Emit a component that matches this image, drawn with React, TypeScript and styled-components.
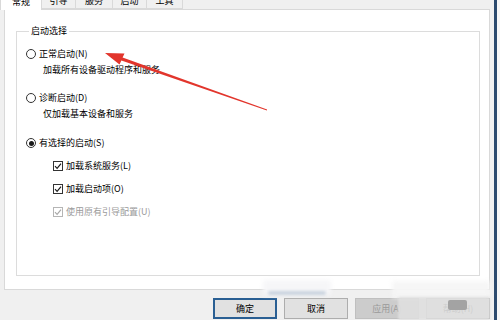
import React from 'react';
import styled, { createGlobalStyle } from 'styled-components';

const GlobalStyle = createGlobalStyle`
  html, body {
    margin: 0;
    padding: 0;
    background: #f0f0f0;
  }
  body {
    font-family: "Noto Sans CJK SC", "Liberation Sans", sans-serif;
    font-size: 9px;
    color: #000;
  }
`;

const Window = styled.div`
  position: relative;
  width: 500px;
  height: 320px;
  overflow: hidden;
  box-sizing: border-box;
  display: flex;
  flex-direction: column;
  background: #f0f0f0;
  border-right: 3px solid #f7f7f7;
  &::after {
    content: '';
    position: absolute;
    top: 0;
    bottom: 0;
    right: 0;
    width: 3px;
    background: #2c4a6e;
  }
`;

const TabStrip = styled.div`
  display: flex;
  height: 9px;
  position: relative;
  z-index: 1;
`;

const Tab = styled.div<{ $w: number; $active?: boolean }>`
  width: ${p => p.$w}px;
  margin-top: -8px;
  box-sizing: border-box;
  display: flex;
  align-items: center;
  justify-content: center;
  background: ${p => (p.$active ? '#ffffff' : '#f0f0f0')};
  border: 1px solid #d9d9d9;
  border-left: ${p => (p.$active ? '1px solid #d9d9d9' : 'none')};
  border-bottom: ${p => (p.$active ? 'none' : '1px solid #d9d9d9')};
  height: ${p => (p.$active ? 18 : 17)}px;
  line-height: 12px;
`;

const Panel = styled.div`
  margin: 0 7px 0 4px;
  height: 281px;
  box-sizing: border-box;
  background: #ffffff;
  border: 1px solid #d9d9d9;
  padding: 15px 9px 13px 11px;
  display: flex;
`;

const GroupBox = styled.fieldset`
  flex: 1;
  margin: 0;
  padding: 11px 0 0 9px;
  border: 1px solid #dcdcdc;
  min-width: 0;
  display: flex;
  flex-direction: column;
`;

const Legend = styled.legend`
  padding: 0 2px;
  margin-left: 3px;
  line-height: 12px;
`;

const Choice = styled.div<{ $gap?: number }>`
  display: flex;
  flex-direction: column;
  margin-top: ${p => p.$gap ?? 0}px;
`;

const Row = styled.label<{ $disabled?: boolean }>`
  display: flex;
  align-items: center;
  gap: 3px;
  height: 12px;
  line-height: 12px;
  color: ${p => (p.$disabled ? '#9a9a9a' : '#000')};
`;

const Radio = styled.span<{ $checked?: boolean }>`
  width: 10px;
  height: 10px;
  box-sizing: border-box;
  border: 1px solid #333;
  border-radius: 50%;
  display: flex;
  align-items: center;
  justify-content: center;
  background: #fff;
  &::after {
    content: '';
    width: 5px;
    height: 5px;
    border-radius: 50%;
    background: ${p => (p.$checked ? '#1a1a1a' : 'transparent')};
  }
`;

const Description = styled.div`
  padding-left: 17px;
  margin-top: 4px;
  line-height: 12px;
`;

const CheckList = styled.div`
  display: flex;
  flex-direction: column;
  gap: 11px;
  padding-left: 27px;
  margin-top: 11px;
`;

const Box = styled.span<{ $disabled?: boolean }>`
  width: 10px;
  height: 10px;
  box-sizing: border-box;
  border: 1px solid ${p => (p.$disabled ? '#b5b5b5' : '#333')};
  background: #fff;
  display: flex;
  align-items: center;
  justify-content: center;
  svg {
    display: block;
  }
`;

const ButtonRow = styled.div`
  display: flex;
  gap: 7px;
  padding: 8px 0 0 213px;
`;

const Button = styled.div<{ $default?: boolean; $disabled?: boolean }>`
  width: 64px;
  height: 21px;
  box-sizing: border-box;
  display: flex;
  align-items: center;
  justify-content: center;
  background: ${p => (p.$disabled ? '#cccccc' : '#e1e1e1')};
  border: ${p => (p.$default ? '2px solid #2a5f93' : p.$disabled ? '1px solid #bfbfbf' : '1px solid #adadad')};
  color: ${p => (p.$disabled ? '#9a9a9a' : '#000')};
`;

const Mosaic = styled.div<{ $x: number; $y: number; $w: number; $h: number; $c: string; $blur?: number }>`
  position: absolute;
  left: ${p => p.$x}px;
  top: ${p => p.$y}px;
  width: ${p => p.$w}px;
  height: ${p => p.$h}px;
  background: ${p => p.$c};
  filter: blur(${p => p.$blur ?? 2}px);
  border-radius: 2px;
  z-index: 3;
`;

const Overlay = styled.svg`
  position: absolute;
  left: 0;
  top: 0;
  z-index: 4;
  pointer-events: none;
`;

const Check = ({ color }: { color: string }) => (
  <svg width="8" height="8" viewBox="0 0 8 8">
    <path d="M1 4.2 L3.1 6.3 L7 1.6" fill="none" stroke={color} strokeWidth="1.2" />
  </svg>
);

const tabs = [
  { label: '常规', w: 42 },
  { label: '引导', w: 34 },
  { label: '服务', w: 37 },
  { label: '启动', w: 34 },
  { label: '工具', w: 36 },
];

const checks = [
  { label: '加载系统服务(L)', disabled: false },
  { label: '加载启动项(O)', disabled: false },
  { label: '使用原有引导配置(U)', disabled: true },
];

export default function App() {
  return (
    <Window>
      <GlobalStyle />
      <TabStrip>
        {tabs.map((t, i) => (
          <Tab key={t.label} $w={t.w} $active={i === 0}>
            {t.label}
          </Tab>
        ))}
      </TabStrip>

      <Panel>
        <GroupBox>
          <Legend>启动选择</Legend>
          <Choice>
            <Row>
              <Radio />
              正常启动(N)
            </Row>
            <Description>加载所有设备驱动程序和服务</Description>
          </Choice>
          <Choice $gap={16}>
            <Row>
              <Radio />
              诊断启动(D)
            </Row>
            <Description>仅加载基本设备和服务</Description>
          </Choice>
          <Choice $gap={17}>
            <Row>
              <Radio $checked />
              有选择的启动(S)
            </Row>
            <CheckList>
              {checks.map(c => (
                <Row key={c.label} $disabled={c.disabled}>
                  <Box $disabled={c.disabled}>
                    <Check color={c.disabled ? '#a8a8a8' : '#1a1a1a'} />
                  </Box>
                  {c.label}
                </Row>
              ))}
            </CheckList>
          </Choice>
        </GroupBox>
      </Panel>

      <ButtonRow>
        <Button $default>确定</Button>
        <Button>取消</Button>
        <Button $disabled>应用(A)</Button>
        <Button>帮助(H)</Button>
      </ButtonRow>

      {/* watermark mosaic over the bottom bar */}
      <Mosaic $x={263} $y={280} $w={68} $h={15} $c="#f6f6f8" />
      <Mosaic $x={268} $y={291} $w={58} $h={4} $c="#c9d3de" $blur={1.5} />
      <Mosaic $x={392} $y={281} $w={98} $h={17} $c="rgba(246,246,246,0.95)" />
      <Mosaic $x={398} $y={297} $w={92} $h={23} $c="rgba(222,222,222,0.92)" $blur={1.2} />
      <Mosaic $x={448} $y={300} $w={19} $h={10} $c="#a3a3a3" $blur={0.4} />

      <Overlay width="500" height="320" viewBox="0 0 500 320">
        <polygon
          points="105,53 124.5,53.5 122.6,57.4 267.1,109.6 266.9,110.4 121.4,60.6 119.5,64.5"
          fill="#e2352c"
        />
      </Overlay>
    </Window>
  );
}
